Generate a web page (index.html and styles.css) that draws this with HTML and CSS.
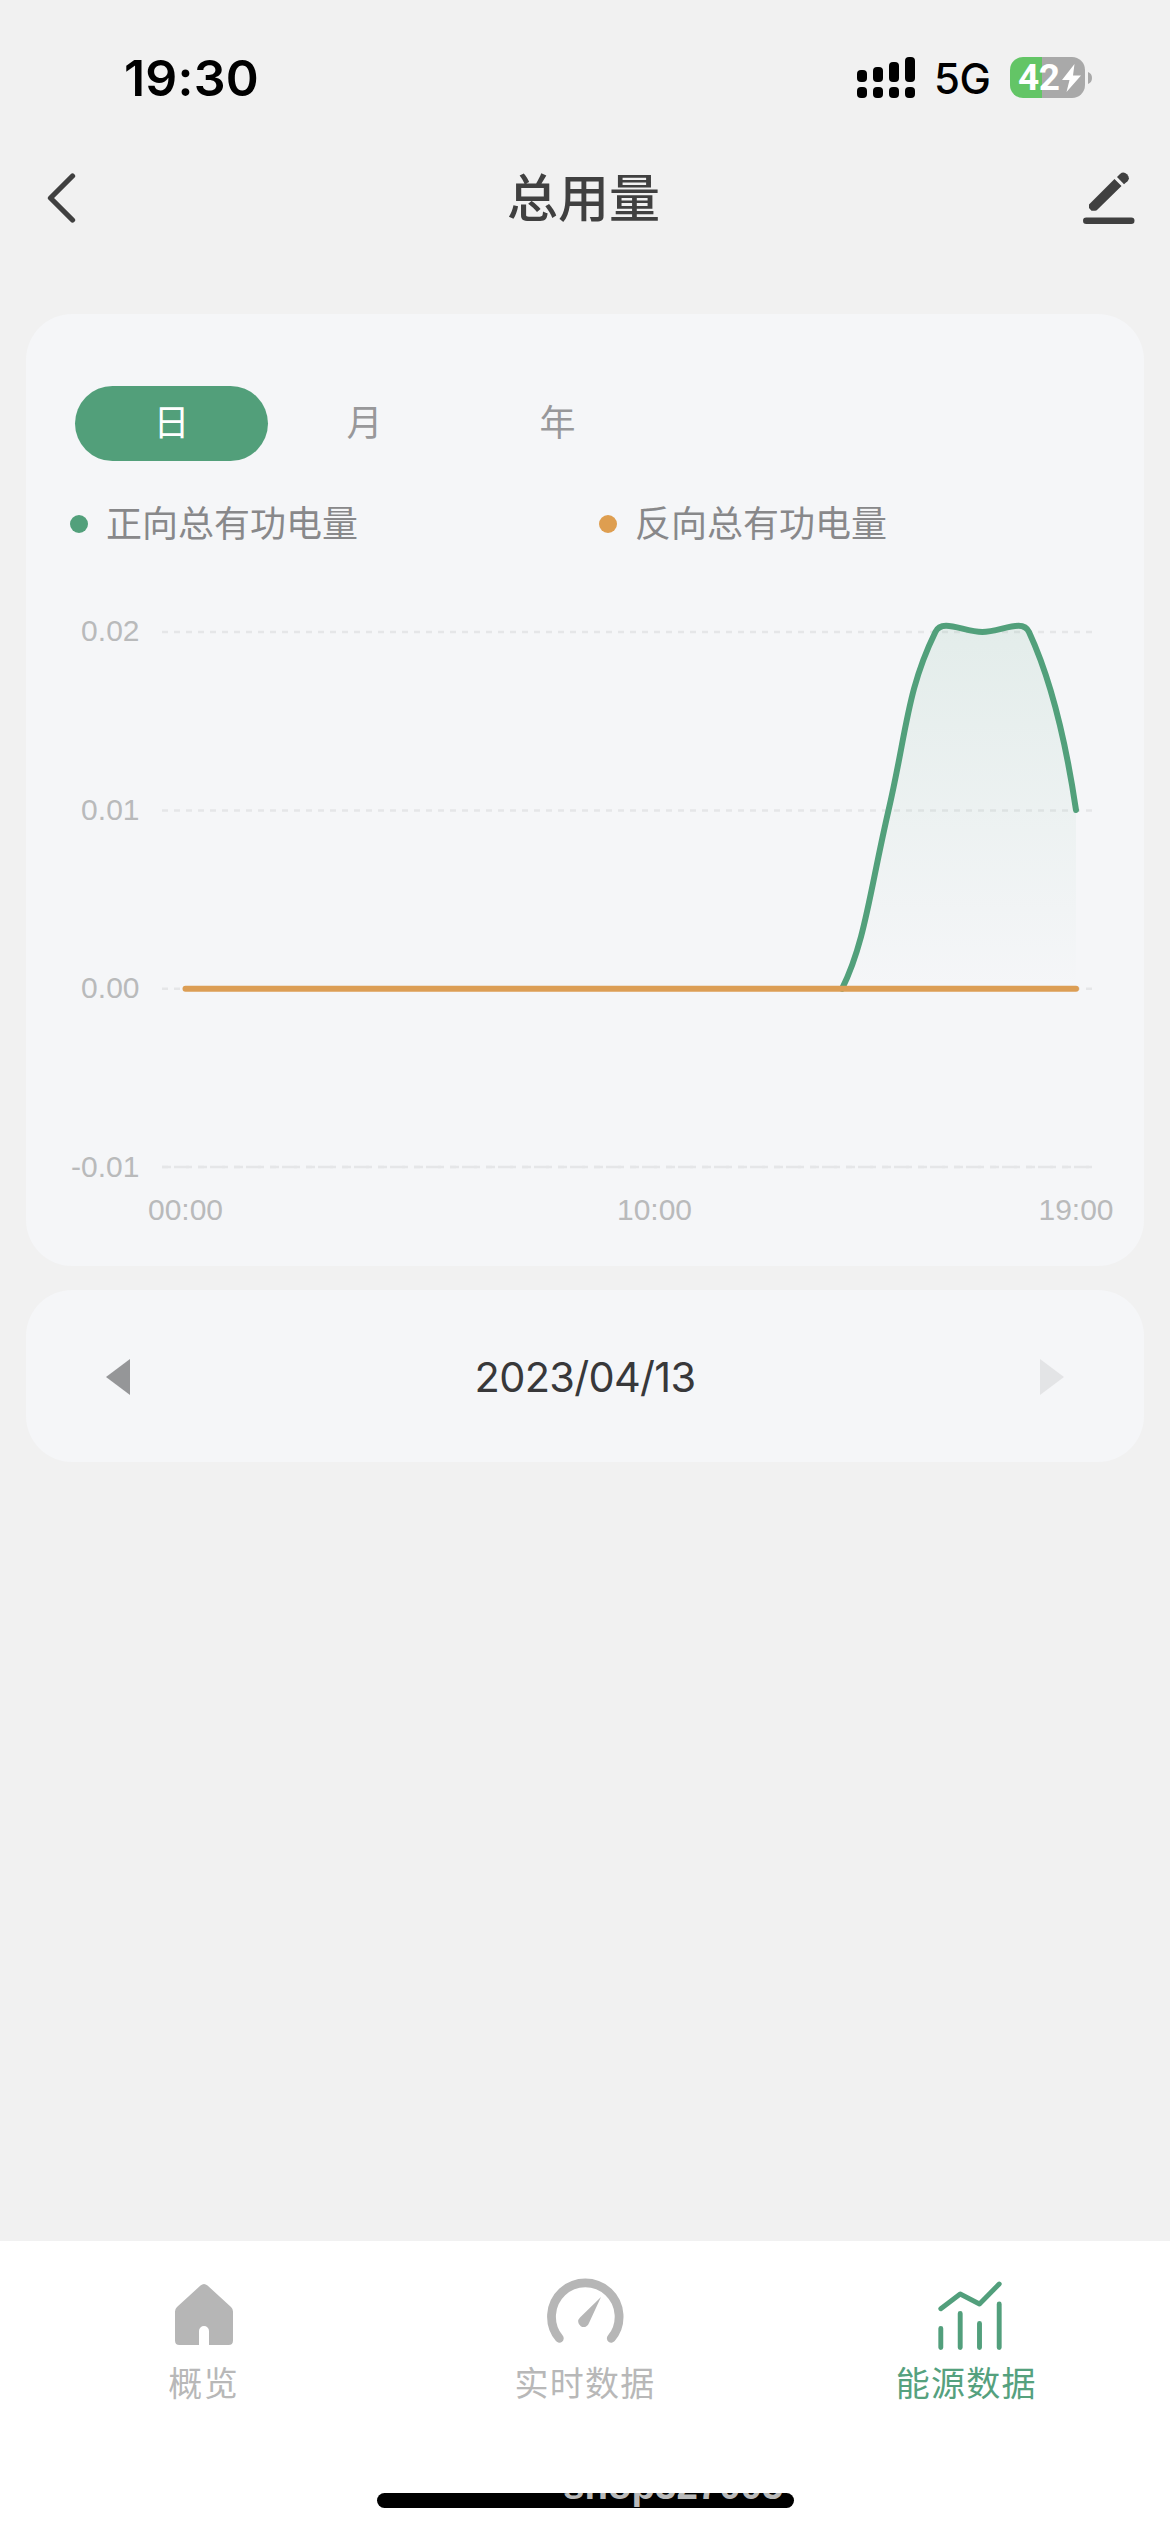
FILE: index.html
```html
<!DOCTYPE html>
<html lang="zh-CN">
<head>
<meta charset="utf-8">
<title>总用量</title>
<link rel="stylesheet" href="styles.css">
</head>
<body>
<div class="app">
  <div class="status">
    <span class="time">19:30</span>
    <div class="status-right">
      <svg class="signal" width="58" height="41" viewBox="0 0 58 41">
        <rect x="0" y="13" width="10" height="12" rx="4"/><rect x="16" y="10" width="10" height="15" rx="4"/><rect x="32" y="5" width="10" height="20" rx="4"/><rect x="48" y="0" width="10" height="25" rx="4"/>
        <rect x="0" y="30" width="10" height="11" rx="4"/><rect x="16" y="30" width="10" height="11" rx="4"/><rect x="32" y="30" width="10" height="11" rx="4"/><rect x="48" y="30" width="10" height="11" rx="4"/>
      </svg>
      <span class="net">5G</span>
      <div class="battery">
        <span class="level">42</span>
        <svg width="19" height="28" viewBox="0 0 19 28"><path d="M12.5 0 L0 16 H7.5 L4.5 28 L19 11.5 H11 Z" fill="#fff"/></svg>
      </div>
      <svg class="nub" width="4" height="12" viewBox="0 0 4 12"><path d="M0 0 Q4 1.5 4 6 Q4 10.500 0 12 Z" fill="#a9a9a9"/></svg>
    </div>
  </div>

  <header class="nav">
    <svg width="30" height="52" viewBox="0 0 30 52"><path d="M26.500 4 L4.500 26 L26.500 48" fill="none" stroke="#404040" stroke-width="5.300" stroke-linecap="round" stroke-linejoin="round"/></svg>
    <h1>总用量</h1>
    <svg width="52" height="52" viewBox="0 0 52 52" fill="#404040">
      <path d="M6 32.500 L31.500 7 L38.500 14 L14.500 37.500 Q13.500 38.800 12 38.800 H8.500 L6 36 Z"/>
      <path d="M34 5 L37 2 Q40.500 -1 44 2.300 Q47.500 6 44.500 9.300 L41 12.300 Z"/>
      <rect x="0" y="45.500" width="51.500" height="6.500" rx="3.250"/>
    </svg>
  </header>

  <section class="card usage">
    <div class="tabs"><span class="tab on">日</span><span class="tab">月</span><span class="tab">年</span></div>
    <div class="legend">
      <div class="key"><i class="dot forward"></i>正向总有功电量</div>
      <div class="key"><i class="dot reverse"></i>反向总有功电量</div>
    </div>
    <svg class="chart" width="1118" height="640" viewBox="26 600 1118 640">
      <defs><linearGradient id="area" x1="0" y1="0" x2="0" y2="1"><stop offset="0" stop-color="#52a07b" stop-opacity=".11"/><stop offset="1" stop-color="#52a07b" stop-opacity="0"/></linearGradient></defs>
      <g class="grid">
        <path d="M162 632H1093M162 810.500H1093M162 988.800H1093M162 1167H1093"/>
        <path class="axis" d="M162 1167H1093"/>
      </g>
      <path fill="url(#area)" d="M842 989 C865 943 870 890 888.600 810 C907 730 907 690 935.400 632 C942 618 964 632 982.300 632 C1000.600 632 1022.600 618 1029 632 C1054 686 1068 756 1076 810 V989 Z"/>
      <path class="line green" d="M842 988.800 C865 943 870 890 888.600 810 C907 730 907 690 935.400 632 C942 618 964 632 982.300 632 C1000.600 632 1022.600 618 1029 632 C1054 686 1068 756 1076 810"/>
      <path class="line orange" d="M185.500 988.800H1076"/>
      <g class="ylab"><text x="139.500" y="641">0.02</text><text x="139.500" y="819.500">0.01</text><text x="139.500" y="998">0.00</text><text x="139.500" y="1176.500">-0.01</text></g>
      <g class="xlab"><text x="185.500" y="1220">00:00</text><text x="654.500" y="1220">10:00</text><text x="1076" y="1220">19:00</text></g>
    </svg>
  </section>

  <section class="card date">
    <svg width="24" height="36" viewBox="0 0 24 36"><path d="M24 0V36L0 18Z" fill="#959698"/></svg>
    <span>2023/04/13</span>
    <svg width="24" height="36" viewBox="0 0 24 36"><path d="M0 0V36L24 18Z" fill="#e3e4e6"/></svg>
  </section>

  <footer class="bottom">
    <nav class="tabbar">
      <div class="item">
        <svg width="80" height="80" viewBox="164 2274 80 80"><path fill="#b6b6b6" d="M200.500 2285.500 Q204 2282.500 207.500 2285.500 L231 2307 Q233 2309 233 2311.500 V2340.500 Q233 2345 228.500 2345 H209 V2331 A5 5 0 0 0 199 2331 V2345 H179.500 Q175 2345 175 2340.500 V2311.500 Q175 2309 177 2307 Z"/></svg>
        <span>概览</span>
      </div>
      <div class="item">
        <svg width="80" height="80" viewBox="545 2274 80 80"><path d="M559.300 2338.300 A33.800 33.800 0 1 1 611.300 2338.300" fill="none" stroke="#b6b6b6" stroke-width="8.800" stroke-linecap="round"/><path fill="#b6b6b6" d="M601 2297 L589 2323 A5.500 5.500 0 1 1 580 2317.500 Z"/></svg>
        <span>实时数据</span>
      </div>
      <div class="item active">
        <svg width="80" height="80" viewBox="924.500 2274 80 80"><path d="M939.300 2308.700L958.700 2294L978 2304L997.700 2284M939.300 2328.500V2347.500M958.700 2313.500V2347.500M978 2323.500V2347.500M997.700 2304V2347.500" fill="none" stroke="#529f7c" stroke-width="4.900" stroke-linecap="round" stroke-linejoin="round"/></svg>
        <span>能源数据</span>
      </div>
    </nav>
    <div class="home"><span>shop327005</span></div>
  </footer>
</div>
</body>
</html>
```
FILE: styles.css
```css
* { box-sizing: border-box; }
body { margin: 0; background: #f1f1f1; font-family: "Inter", "Noto Sans CJK SC", sans-serif; }
svg { display: block; flex: none; }
.app { width: 1170px; height: 2532px; display: flex; flex-direction: column; overflow: hidden; }

.status { height: 146px; padding: 9px 78px 0 124px; display: flex; align-items: center; justify-content: space-between; }
.time { font-size: 50px; font-weight: 600; color: #000; letter-spacing: 0.2px; }
.status-right { display: flex; align-items: center; }
.net { font-size: 42px; font-weight: 500; margin-left: 19px; width: 76px; line-height: 41px; padding-top: 2px; letter-spacing: -0.5px; }
.battery { width: 75px; height: 41px; border-radius: 13px; background: linear-gradient(to right, #63c566 32px, #a9a9a9 32px); display: flex; align-items: center; padding-left: 8px; gap: 2px; }
.level { font: 700 37px/41px Roboto, sans-serif; color: #fff; width: 42px; letter-spacing: -0.5px; }
.nub { margin-left: 3px; }

.nav { height: 104px; padding: 0 35px 0 46px; display: flex; align-items: center; justify-content: space-between; }
.nav h1 { margin: 2px 0 0 8px; font-size: 51px; line-height: 74px; font-weight: 500; color: #404040; }

.card { margin: 0 26px; border-radius: 46px; background: #f5f6f8; }
.usage { margin-top: 64px; height: 952px; padding-top: 72px; }
.tabs { display: flex; padding-left: 49px; }
.tab { width: 193px; height: 75px; border-radius: 38px; font-size: 36px; line-height: 75px; text-align: center; color: #98989a; }
.tab.on { background: #529f7a; color: #fff; }
.legend { display: grid; grid-template-columns: 529px 1fr; padding-left: 44px; height: 125px; align-items: center; }
.key { display: flex; align-items: center; font-size: 36px; line-height: 50px; color: #88888a; }
.dot { width: 18px; height: 18px; border-radius: 50%; margin-right: 18px; }
.forward { background: #52a07b; }
.reverse { background: #de9e50; }
.chart { margin-top: 14px; }
.grid path { stroke: #e5e6e8; stroke-width: 2.5; stroke-dasharray: 6 6; fill: none; }
.grid .axis { stroke-dasharray: 9 9; }
.line { fill: none; stroke-width: 6; stroke-linecap: round; }
.green { stroke: #52a07b; }
.orange { stroke: #dc9e55; }
.chart text { font: 30px "Liberation Sans", sans-serif; fill: #b9babb; }
.ylab { text-anchor: end; }
.xlab { text-anchor: middle; }

.date { margin-top: 24px; height: 172px; padding: 2px 80px 0; display: flex; align-items: center; justify-content: space-between; }
.date span { font-size: 41.5px; line-height: 50px; padding-bottom: 1px; letter-spacing: -0.7px; color: #38383a; }

.bottom { margin-top: auto; height: 291px; background: #fff; }
.tabbar { height: 252px; display: flex; padding: 33px 13px 0; }
.item { flex: 1; display: flex; flex-direction: column; align-items: center; font-size: 34px; line-height: 50px; letter-spacing: 1.3px; color: #b8b8b8; }
.item span { margin-top: 5px; }
.item.active { color: #55a17e; }
.home { width: 417px; height: 15px; margin: 0 0 0 377px; border-radius: 8px; background: #000; overflow: hidden; display: flex; align-items: flex-end; }
.home span { margin-left: 186px; padding-bottom: 3px; font: 700 38.5px/38px "Liberation Sans", sans-serif; color: #bbb; }
```
